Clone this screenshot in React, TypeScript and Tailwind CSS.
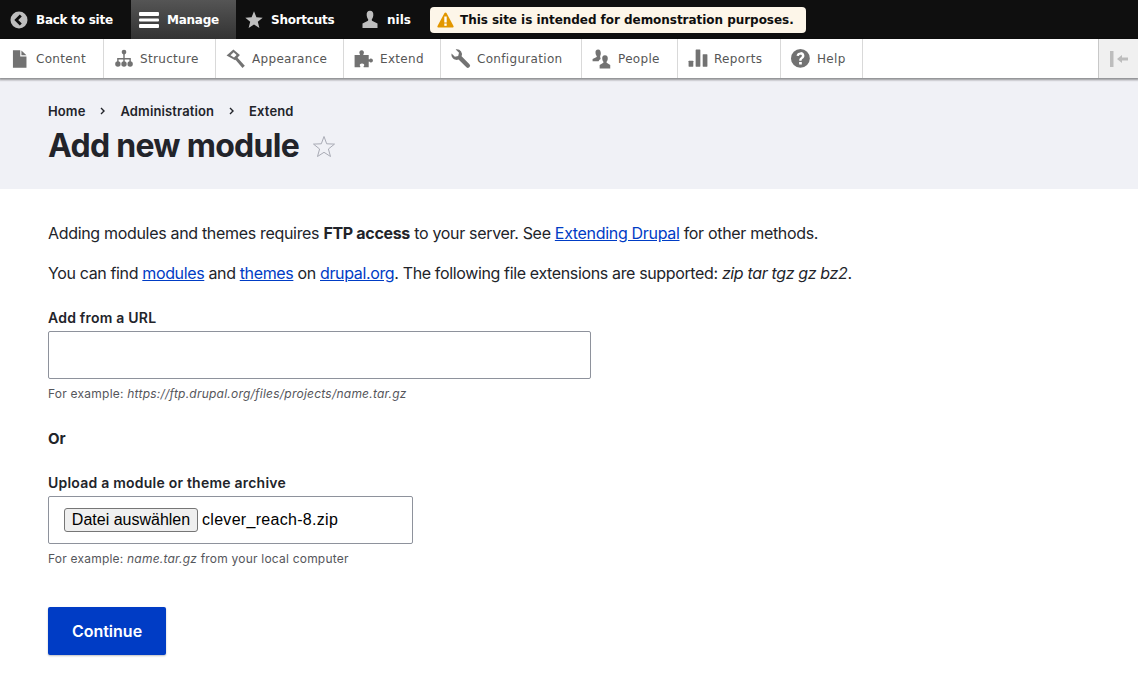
import React from "react";

const G = "#727272";

const icons: Record<string, React.ReactNode> = {
  content: <path d="M2.500 1h6.200v5.300h5.300V16H2.500zM9.700 1.200 14 5.300H9.700z" fill={G} />,
  structure: (
    <g fill={G}>
      <circle cx="8.500" cy="2.600" r="2" />
      <path d="M7.900 4h1.200v3.700H14.300V11h-1.200V8.900H9.100V11H7.900V8.900H3.900V11H2.700V7.700h5.200z" />
      <circle cx="3.300" cy="12.700" r="2.300" />
      <circle cx="8.500" cy="12.700" r="2.300" />
      <circle cx="13.700" cy="12.700" r="2.300" />
    </g>
  ),
  appearance: (
    <g fill={G}>
      <path d="M6.300 0.500 11.800 5 7.800 9.500 0.500 5.600z" />
      <path d="M7.700 8.800 9.400 7l6.600 7.200-2 1.900z" />
      <path d="M3.800 5.300 6.500 2.800 9 5 6.800 7.300z" fill="#fff" />
    </g>
  ),
  extend: (
    <path
      d="M.5 5h4.300c.6 0 .2-.8-.1-1.200C4.100 2.600 5.100 1 6.500 1s2.400 1.600 1.800 2.800c-.3.400-.7 1.200-.1 1.200h4.300v3.600c0 .6.700.3 1-.1.900-.8 2.600-.2 2.600 1.300s-1.700 2.100-2.600 1.200c-.3-.4-1-.7-1 0V15.500H8.400c-.6 0-.3-.7.100-1 .7-1-.2-2.100-1.700-2.100s-2.300 1-1.700 2.100c.3.300.6 1 0 1H.5z"
      fill={G}
    />
  ),
  config: (
    <path
      d="M11.500.3a4.300 4.300 0 0 0-4 5.900L.8 12.900a1.700 1.700 0 0 0 0 2.400l.2.200a1.700 1.700 0 0 0 2.400 0L10.100 8.900a4.300 4.300 0 0 0 6-4.100l-.1-1-2.800 2.700-2.800-.6-.7-2.800L12.500.4c-.3-.1-.7-.1-1-.1z"
      fill={G}
      transform="translate(16.500 0) scale(-1 1)"
    />
  ),
  people: (
    <g fill={G}>
      <path d="M5.200 .5C3.500 .5 2.800 1.800 3 3.300c.1 1 .5 2 1 2.600.2.400 0 .9-.4 1.100L.5 8.500v2h5.100c.2-.9.900-1.600 1.800-2.100-.3-.9-.5-1.700-.5-2.300.3-.5.500-1.200.6-2 .1-1.900-.6-3.600-2.300-3.600z" />
      <path d="M11 5.300c-1.800 0-2.500 1.400-2.300 3 .1 1 .5 2 1 2.600.2.400 0 .9-.4 1.100L6.500 13.500v3h9v-3l-2.700-1.500c-.4-.2-.6-.7-.4-1.100.5-.6.900-1.600 1-2.600.2-1.600-.5-3-2.400-3z" />
    </g>
  ),
  reports: (
    <g fill={G}>
      <rect x=".5" y="10" width="4" height="5" rx=".4" />
      <rect x="6.500" y=".5" width="4" height="14.500" rx=".4" />
      <rect x="12.500" y="4.500" width="4" height="10.500" rx=".4" />
    </g>
  ),
  help: (
    <g>
      <circle cx="8" cy="8" r="8" fill={G} />
      <path
        d="M8.200 2.900c-2 0-3.300 1-3.500 2.800l2.100.3c.1-.8.500-1.200 1.300-1.200.7 0 1.200.4 1.200 1 0 .6-.4.900-1 1.400-.9.700-1.300 1.200-1.300 2.300v.5h2v-.4c0-.6.300-.9.900-1.300.9-.7 1.500-1.300 1.500-2.600 0-1.900-1.300-3.100-3.200-3.100zM6.900 11h2.300v2.100H6.900z"
        fill="#fff"
      />
    </g>
  ),
};

const tray = [
  { label: "Content", icon: "content", w: "w-[104px]" },
  { label: "Structure", icon: "structure", w: "w-[112px]" },
  { label: "Appearance", icon: "appearance", w: "w-[128px]" },
  { label: "Extend", icon: "extend", w: "w-[97px]" },
  { label: "Configuration", icon: "config", w: "w-[141px]" },
  { label: "People", icon: "people", w: "w-[96px]" },
  { label: "Reports", icon: "reports", w: "w-[103px]" },
  { label: "Help", icon: "help", w: "w-[82px]" },
];

function Toolbar() {
  return (
    <div className="relative z-10 font-['DejaVu_Sans',sans-serif]">
      <div className="flex h-[39px] items-center bg-[#0f0f0f] text-[12px] font-bold tracking-[-0.25px] text-white">
        <div className="flex h-full w-[131px] items-center gap-[8px] pl-[10px]">
          <svg width="18" height="18" viewBox="0 0 18 18">
            <circle cx="9" cy="9" r="8.500" fill="#bebebe" />
            <path d="M10.800 4.500 6.300 9l4.500 4.500" stroke="#0f0f0f" strokeWidth="2.800" fill="none" />
          </svg>
          <span>Back to site</span>
        </div>
        <div className="flex h-full w-[105px] items-center gap-[8px] bg-gradient-to-b from-[#555555] to-[#333333] pl-[8px]">
          <svg width="20" height="20" viewBox="0 0 20 20" fill="#fff">
            <rect x="0" y="2" width="20" height="4" rx="1" />
            <rect x="0" y="8.500" width="20" height="3" rx="1" />
            <rect x="0" y="14" width="20" height="4" rx="1" />
          </svg>
          <span>Manage</span>
        </div>
        <div className="flex h-full w-[118px] items-center gap-[8px] pl-[9px]">
          <svg width="18" height="18" viewBox="0 0 18 18">
            <path d="M9 .3l2.400 6 6.300.4-4.900 4.100 1.600 6.200L9 13.600l-5.400 3.400 1.600-6.200L.3 6.700l6.300-.4z" fill="#bebebe" />
          </svg>
          <span>Shortcuts</span>
        </div>
        <div className="flex h-full w-[76px] items-center gap-[8px] pl-[7px]">
          <svg width="18" height="20" viewBox="0 0 18 20">
            <path d="M9 .8c-2.500 0-3.600 2-3.300 4.600.2 1.500.8 3 1.400 3.800.4.700 0 1.400-.6 1.700L1.500 13.500V18h15v-4.500l-5-2.600c-.6-.3-1-1-.6-1.700.6-.8 1.200-2.300 1.400-3.800C12.600 2.800 11.500.8 9 .8z" fill="#bebebe" />
          </svg>
          <span className="tracking-normal">nils</span>
        </div>
        <div className="flex h-[26px] w-[376px] items-center gap-[6px] rounded-[4px] bg-[#fdf6e9] pl-[7px] tracking-[-0.04px] text-[#0f0f0f]">
          <svg width="17" height="16" viewBox="0 0 17 16">
            <path d="M8.500 0.500c.4 0 .8.200 1 .6l7 12.800c.4.700-.1 1.600-1 1.600h-14c-.9 0-1.400-.9-1-1.600l7-12.800c.2-.4.600-.6 1-.6z" fill="#e29700" />
            <rect x="7.300" y="4.500" width="2.400" height="6" fill="#fff" />
            <rect x="7.300" y="11.500" width="2.400" height="2.300" fill="#fff" />
          </svg>
          <span>This site is intended for demonstration purposes.</span>
        </div>
      </div>
      <div className="flex h-[39px] items-stretch bg-white text-[12px] tracking-[0.32px] text-[#565656] shadow-[0_1px_2px_1px_rgba(0,0,0,0.4)]">
        {tray.map((t) => (
          <div key={t.label} className={`flex items-center gap-[6px] border-r border-[#d9d9d9] pl-[10px] ${t.w}`}>
            <svg width="20" height="20" viewBox="0 0 17 17" className="shrink-0">
              {icons[t.icon]}
            </svg>
            <span>{t.label}</span>
          </div>
        ))}
        <div className="flex-1" />
        <div className="flex w-[40px] items-center justify-center border-l border-[#c8c8c8] bg-[#f0f0f0]">
          <svg width="20" height="16" viewBox="0 0 20 16" fill="#bdbdbd">
            <rect x="1" y="0" width="3.500" height="16" />
            <path d="M8 8l5-4v2.500h6v3h-6V12z" />
          </svg>
        </div>
      </div>
    </div>
  );
}

function Crumb() {
  return (
    <svg width="6" height="8" viewBox="0 0 6 8" className="mx-[14.5px]">
      <path d="M1 1l3 3-3 3" stroke="#22242a" strokeWidth="1.400" fill="none" />
    </svg>
  );
}

export default function App() {
  return (
    <div className="h-[697px] overflow-hidden bg-white font-['Inter',sans-serif] text-[16px] text-[#22242a]">
      <Toolbar />
      <header className="h-[111px] bg-[#f0f1f6] px-[48px] pt-[25px]">
        <div className="flex h-[16px] items-center text-[13px] font-semibold leading-[16px] tracking-[0.12px]">
          <span>Home</span>
          <Crumb />
          <span>Administration</span>
          <Crumb />
          <span>Extend</span>
        </div>
        <div className="mt-[7px] flex items-center gap-[13px]">
          <h1 className="text-[32px] font-bold leading-[40px] tracking-[-0.72px]">Add new module</h1>
          <svg width="24" height="24" viewBox="0 0 24 24" className="mt-[1px]">
            <path d="M12 1.500l2.700 7.300 7.800.3-6.100 4.900 2.100 7.500L12 17.300l-6.500 4.200 2.100-7.500-6.100-4.900 7.800-.3z" fill="none" stroke="#a9abb5" strokeWidth="1" />
          </svg>
        </div>
      </header>
      <main className="px-[48px] pt-[32px]">
        <p className="text-[16px] leading-[24px] tracking-[-0.32px]">
          Adding modules and themes requires <strong className="font-bold">FTP access</strong> to your server. See{" "}
          <a className="text-[#003cc5] underline">Extending Drupal</a> for other methods.
        </p>
        <p className="mt-[16px] leading-[24px] tracking-[-0.36px]">
          You can find <a className="text-[#003cc5] underline">modules</a> and{" "}
          <a className="text-[#003cc5] underline">themes</a> on <a className="text-[#003cc5] underline">drupal.org</a>.
          The following file extensions are supported: <em>zip tar tgz gz bz2</em>.
        </p>
        <label className="mt-[23px] block text-[14px] font-semibold leading-[20px] tracking-[0.22px]">Add from a URL</label>
        <div className="mt-[3px] h-[48px] w-[543px] rounded-[2px] border border-[#8e929c] bg-white" />
        <p className="mt-[6px] text-[12px] leading-[18px] tracking-[0.23px] text-[#55565b]">
          For example: <em>https://ftp.drupal.org/files/projects/name.tar.gz</em>
        </p>
        <p className="mt-[24px] text-[15px] font-bold leading-[24px]">Or</p>
        <label className="mt-[22px] block text-[14px] font-semibold leading-[20px] tracking-[0.22px]">Upload a module or theme archive</label>
        <div className="mt-[3px] flex h-[48px] w-[365px] items-center rounded-[2px] border border-[#8e929c] bg-white pl-[15px] font-['Liberation_Sans',sans-serif]">
          <span className="flex h-[24px] w-[134px] items-center justify-center rounded-[3px] border border-[#767676] bg-[#efefef] text-[16px] text-black">
            Datei auswählen
          </span>
          <span className="ml-[4px] text-[16px] tracking-[0.3px] text-black">clever_reach-8.zip</span>
        </div>
        <p className="mt-[6px] text-[12px] leading-[18px] tracking-[0.21px] text-[#55565b]">
          For example: <em>name.tar.gz</em> from your local computer
        </p>
        <button className="mt-[39px] block h-[48px] w-[118px] rounded-[2px] bg-[#003cc5] text-[16px] font-semibold text-white shadow-[0_1px_2px_rgba(0,0,0,0.25)]">
          Continue
        </button>
      </main>
    </div>
  );
}
